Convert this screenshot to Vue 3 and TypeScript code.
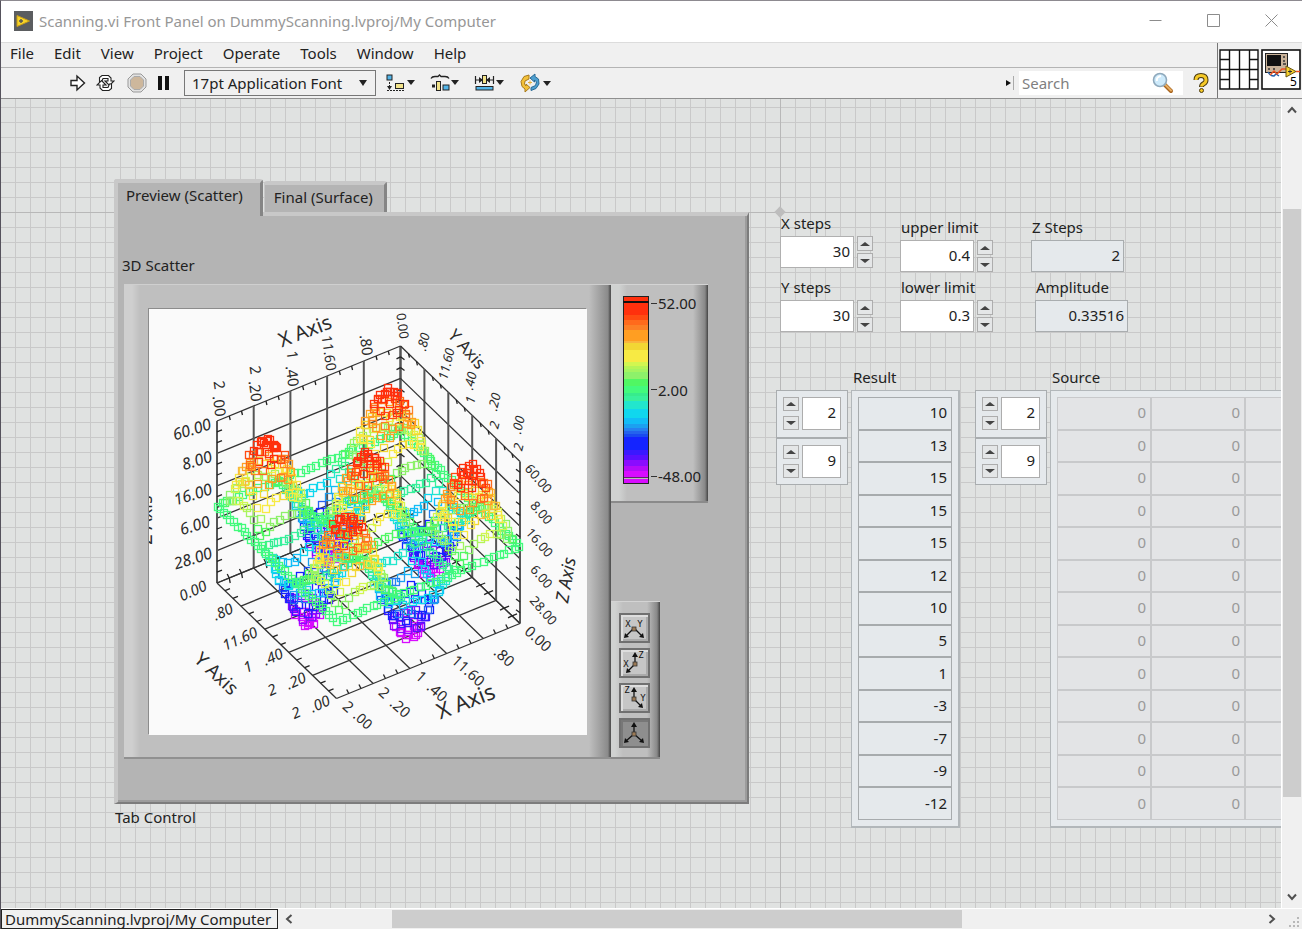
<script setup lang="ts">
import { ref } from 'vue'

interface Line { x1: number; y1: number; x2: number; y2: number; w: number; c: string }
interface Marker { x: number; y: number; c: string }
interface Caption { t: string; x: number; y: number; r: number; s: number; i?: boolean }

const menus = ['File', 'Edit', 'View', 'Project', 'Operate', 'Tools', 'Window', 'Help']

const xSteps = ref('30')
const ySteps = ref('30')
const upper = ref('0.4')
const lower = ref('0.3')
const zSteps = ref('2')
const amplitude = ref('0.33516')
const search = ref('')
const activeTab = ref(0)
const view = ref(3)
const indexes = ref([['2', '9'], ['2', '9']])

const result = [10, 13, 15, 15, 15, 12, 10, 5, 1, -3, -7, -9, -12]

/* colour ramp: [height, colour], top to bottom */
const ramp: [number, string][] = [
  [18, '#ff300d'], [5, '#ff4b12'], [5, '#ff6a1c'], [5, '#fc8026'], [11, '#ff9e22'], [2, '#f9b53e'],
  [7, '#f2d634'], [12, '#f7ea44'], [4, '#d2f650'], [3, '#b5f457'], [3, '#a4f460'], [7, '#8df16a'],
  [7, '#50f763'], [7, '#43fa7d'], [3, '#37ec8c'], [5, '#39f09c'], [8, '#22e6cd'], [9, '#10d7ee'],
  [6, '#12bcf7'], [4, '#1ca0f0'], [3, '#2680f0'], [3, '#2463ee'], [3, '#1a4af0'], [13, '#1424ff'],
  [5, '#3a18ff'], [5, '#5a10ff'], [6, '#8a0cff'], [5, '#b40cf8'], [12, '#d80cff'],
]
const rampTotal = ramp.reduce((a, b) => a + b[0], 0)
const bands = ramp.map(([h, c], i) => ({
  h, c, y: ramp.slice(0, i).reduce((a, b) => a + b[0], 0),
}))
function colourAt(t: number): string {
  const y = t * rampTotal
  const hit = bands.find(b => y < b.y + b.h)
  return hit ? hit.c : '#d80cff'
}

/* u runs along X, v along Y, d is the depth below the ceiling in pixels */
const H = 162
const project = (u: number, v: number, d: number) => ({
  x: 400.5 - 183.5 * u + 119.5 * v,
  y: 346 + 75 * u + 115.5 * v + d,
})
const lines: Line[] = []
function seg(a: [number, number, number], b: [number, number, number], w = 1.3, c = '#333') {
  const p = project(...a)
  const q = project(...b)
  lines.push({ x1: p.x, y1: p.y, x2: q.x, y2: q.y, w, c })
}
function tick(a: [number, number, number], dx: number, dy: number) {
  const p = project(...a)
  lines.push({ x1: p.x, y1: p.y, x2: p.x + dx, y2: p.y + dy, w: 1.3, c: '#222' })
}
for (let k = 0; k <= 5; k++) {
  const f = k / 5
  seg([f, 0, 0], [f, 0, H], 2, '#555')
  seg([0, f, 0], [0, f, H], 2, '#555')
  seg([0, 0, f * H], [1, 0, f * H])
  seg([0, 0, f * H], [0, 1, f * H])
  seg([f, 0, H], [f, 1, H])
  seg([0, f, H], [1, f, H])
}
for (let k = 0; k < 15; k++) {
  if (k % 3 === 0) continue
  const f = k / 15
  tick([f, 0, 0], 1, 4)
  tick([0, f, 0], 1, 4)
  tick([1, 0, f * H], 5, -2)
  tick([0, 1, f * H], -4, -3)
  tick([0, 0, f * H], 4, 3)
  tick([0, 0, f * H], -4, 2)
  tick([1, f, H], 5, -2)
  tick([f, 1, H], -2, -4)
  tick([f, 0, H], 1, 5)
  tick([f, 0, H], -2, -4)
  tick([0, f, H], 5, -2)
  tick([0, f, H], -4, 2)
}

const markers: (Marker & { o: number })[] = []
const noise = (n: number) => { const s = Math.sin(n * 12.9898) * 43758.5453; return s - Math.floor(s) - 0.5 }
const N = 36
for (let i = 0; i < N; i++) {
  for (let j = 0; j < N; j++) {
    const u = i / (N - 1)
    const v = j / (N - 1)
    const z = Math.sin(3 * Math.PI * u) * Math.sin(3 * Math.PI * v)
    const amp = 2 + 4 * Math.abs(z)
    const p = project(u, v, 85 - 72 * z + noise(i * 31 + j) * amp)
    p.x += noise(i * 57 + j * 3 + 7) * amp
    markers.push({ x: Math.round(p.x) - 3.5, y: Math.round(p.y) - 3.5, c: colourAt((1 - z) / 2), o: u + v })
  }
}
markers.sort((a, b) => a.o - b.o)

const captions: Caption[] = [
  { t: 'X Axis', x: 305, y: 331, r: -21, s: 20 },
  { t: 'Y Axis', x: 467, y: 349, r: 48, s: 17 },
  { t: 'Y Axis', x: 216, y: 674, r: 43, s: 19 },
  { t: 'X Axis', x: 466, y: 702, r: -21, s: 22 },
  { t: 'Z Axis', x: 566, y: 580, r: -80, s: 18, i: true },
  { t: 'Z Axis', x: 146, y: 520, r: -90, s: 18 },
  { t: '60.00', x: 192, y: 430, r: -17, s: 16, i: true },
  { t: '8.00', x: 197, y: 461, r: -17, s: 16, i: true },
  { t: '16.00', x: 193, y: 495, r: -17, s: 16, i: true },
  { t: '6.00', x: 195, y: 526, r: -17, s: 16, i: true },
  { t: '28.00', x: 193, y: 559, r: -17, s: 16, i: true },
  { t: '0.00', x: 193, y: 591, r: -24, s: 15, i: true },
  { t: '.80', x: 223, y: 612, r: -24, s: 15, i: true },
  { t: '11.60', x: 240, y: 639, r: -24, s: 15, i: true },
  { t: '1', x: 248, y: 667, r: -24, s: 15, i: true },
  { t: '.40', x: 273, y: 657, r: -24, s: 15, i: true },
  { t: '2', x: 272, y: 690, r: -24, s: 15, i: true },
  { t: '.20', x: 296, y: 681, r: -24, s: 15, i: true },
  { t: '2', x: 296, y: 713, r: -24, s: 15, i: true },
  { t: '.00', x: 320, y: 704, r: -24, s: 15, i: true },
  { t: '2', x: 348, y: 707, r: 42, s: 15 },
  { t: '.00', x: 363, y: 720, r: 42, s: 14 },
  { t: '2', x: 384, y: 693, r: 42, s: 15 },
  { t: '.20', x: 400, y: 708, r: 42, s: 15 },
  { t: '1', x: 421, y: 677, r: 42, s: 15 },
  { t: '.40', x: 437, y: 692, r: 42, s: 15 },
  { t: '11.60', x: 468, y: 671, r: 42, s: 15 },
  { t: '.80', x: 504, y: 657, r: 42, s: 15 },
  { t: '0.00', x: 538, y: 639, r: 42, s: 15 },
  { t: '2', x: 219, y: 385, r: 82, s: 15 },
  { t: '.00', x: 219, y: 406, r: 82, s: 15 },
  { t: '2', x: 255, y: 370, r: 82, s: 15 },
  { t: '.20', x: 255, y: 391, r: 82, s: 15 },
  { t: '1', x: 292, y: 355, r: 82, s: 15 },
  { t: '.40', x: 292, y: 376, r: 82, s: 15 },
  { t: '11.60', x: 329, y: 353, r: 82, s: 14 },
  { t: '.80', x: 366, y: 345, r: 82, s: 15 },
  { t: '0.00', x: 402, y: 326, r: 82, s: 13 },
  { t: '.80', x: 424, y: 342, r: -76, s: 13, i: true },
  { t: '11.60', x: 447, y: 364, r: -76, s: 13, i: true },
  { t: '1', x: 471, y: 400, r: -76, s: 13, i: true },
  { t: '.40', x: 471, y: 381, r: -76, s: 13, i: true },
  { t: '2', x: 495, y: 425, r: -76, s: 13, i: true },
  { t: '.20', x: 495, y: 402, r: -76, s: 13, i: true },
  { t: '2', x: 519, y: 447, r: -76, s: 13, i: true },
  { t: '.00', x: 519, y: 425, r: -76, s: 13, i: true },
  { t: '60.00', x: 538, y: 479, r: 49, s: 13 },
  { t: '8.00', x: 541, y: 513, r: 49, s: 13 },
  { t: '16.00', x: 539, y: 543, r: 49, s: 13 },
  { t: '6.00', x: 541, y: 577, r: 49, s: 13 },
  { t: '28.00', x: 543, y: 611, r: 49, s: 13 },
]

const views = [
  { name: 'XY view', lines: ['M14 14 6 22', 'M14 14 22 22'], heads: ['4,24 5,19 9,23', '24,24 23,19 19,23'], text: [['X', 8, 13], ['Y', 20, 13]] },
  { name: 'XZ view', lines: ['M15 15V6', 'M15 15 8 22'], heads: ['15,3 12,8 18,8', '6,24 7,19 11,23'], text: [['X', 6, 18], ['Z', 21, 9]] },
  { name: 'YZ view', lines: ['M14 15V6', 'M14 15 21 22'], heads: ['14,3 11,8 17,8', '23,24 22,19 18,23'], text: [['Z', 7, 9], ['Y', 23, 17]] },
  { name: 'Perspective view', lines: ['M14 15V6', 'M14 15 6 22', 'M14 15 22 22'], heads: ['14,3 11,8 17,8', '4,24 5,19 9,23', '24,24 23,19 19,23'], text: [] },
] as { name: string; lines: string[]; heads: string[]; text: [string, number, number][] }[]

function bump(value: string, by: number): string {
  return String(Math.round((Number(value) + by) * 10) / 10)
}
</script>

<template>
  <div class="window">
    <header class="titlebar">
      <svg class="appicon" viewBox="0 0 19 20" aria-hidden="true">
        <rect width="19" height="20" fill="#5b5d60" />
        <path d="M3 4.500V15.500L15.500 10Z" fill="#f8d427" stroke="#c79d18" />
        <path d="M5 10h4M7 8v4" stroke="#555" stroke-width="1.400" />
      </svg>
      <h1>Scanning.vi Front Panel on DummyScanning.lvproj/My Computer</h1>
      <button class="winbtn" aria-label="Minimize"><svg viewBox="0 0 13 13"><path d="M.5 6.500h12" /></svg></button>
      <button class="winbtn" aria-label="Maximize"><svg viewBox="0 0 13 13"><path d="M.5.5h12v12H.5z" /></svg></button>
      <button class="winbtn" aria-label="Close"><svg viewBox="0 0 13 13"><path d="M.5.5l12 12M12.500.5l-12 12" /></svg></button>
    </header>

    <div class="head">
      <div class="bars">
        <nav class="menubar">
          <button v-for="m in menus" :key="m">{{ m }}</button>
        </nav>
        <div class="toolbar">
          <button aria-label="Run" class="tool run">
            <svg width="16" height="18" viewBox="0 0 16 18"><path d="M1 6.500h6V2l7.500 7L7 16v-4.500H1z" fill="#fff" stroke="#222" stroke-width="1.400" /></svg>
          </button>
          <button aria-label="Run Continuously" class="tool loop">
            <svg width="19" height="18" viewBox="0 0 19 18" fill="#fff" stroke="#222" stroke-width="1.100">
              <path d="M3.500 8V3.500L6 1.500h6.500L15 4v3h3l-4.500 4.500L9 7h3V4.500H7L5.500 8z" />
              <path d="M15.500 10v4.500L13 16.500H6.500L4 14v-3H1l4.500-4.500L10 11H7v2.500h5l1.500-3.500z" />
            </svg>
          </button>
          <button aria-label="Abort Execution" class="tool abort">
            <svg width="20" height="20" viewBox="0 0 20 20">
              <path d="M6 1h8l5 5v8l-5 5H6l-5-5V6z" fill="#e2e2e2" stroke="#999" />
              <path d="M7 3.500h6L16.500 7v6L13 16.500H7L3.500 13V7z" fill="#cdb79c" stroke="#aaa" />
            </svg>
          </button>
          <button aria-label="Pause" class="tool pause">
            <svg width="12" height="14" viewBox="0 0 12 14"><path d="M0 0h4v14H0zM7 0h4v14H7z" fill="#111" /></svg>
          </button>
          <div class="fontpick">
            <select aria-label="Text settings"><option>17pt Application Font</option></select>
            <svg width="8" height="6" viewBox="0 0 8 6"><path d="M0 0h8L4 6z" fill="#222" /></svg>
          </div>
          <button aria-label="Align Objects" class="tool align">
            <svg width="29" height="18" viewBox="0 0 29 18">
              <rect x="1" y="1" width="5" height="5" fill="#52b4e8" stroke="#222" />
              <path d="M3.500 8v6M1 16.500h17" stroke="#222" stroke-dasharray="2 1" />
              <path d="M1 12h5l-2.500 4z" fill="#222" />
              <rect x="9.500" y="9.500" width="8" height="5" fill="#f2e38a" stroke="#222" />
              <path d="M21 6h8l-4 5z" fill="#222" />
            </svg>
          </button>
          <button aria-label="Distribute Objects" class="tool dist">
            <svg width="29" height="18" viewBox="0 0 29 18">
              <path d="M1 4.500Q2 2.500 5 2.500h3L9.500 1 11 2.500h4q3 0 4 2" fill="none" stroke="#222" stroke-width="1.300" />
              <path d="M2 10.500h3v3H2z" fill="#222" />
              <rect x="6.500" y="7.500" width="4" height="9" fill="#f2e38a" stroke="#222" />
              <rect x="13" y="11" width="6" height="5" fill="#52b4e8" stroke="#222" />
              <path d="M21 6h8l-4 5z" fill="#222" />
            </svg>
          </button>
          <button aria-label="Resize Objects" class="tool resize">
            <svg width="30" height="18" viewBox="0 0 30 18">
              <path d="M1.500 2v8M19.500 2v8M2 6h6M13 6h6" stroke="#222" stroke-width="1.200" />
              <path d="M5 3v6l4-3zM16 3v6l-4-3z" fill="#222" />
              <rect x="8.500" y="1.500" width="4" height="8" fill="#f2e38a" stroke="#222" />
              <rect x="2" y="12.500" width="17" height="3.500" fill="#52b4e8" stroke="#222" />
              <path d="M22 6h8l-4 5z" fill="#222" />
            </svg>
          </button>
          <button aria-label="Reorder" class="tool order">
            <svg width="31" height="20" viewBox="0 0 31 20">
              <path d="M9 2 4 3.500 1 8.500l1 5 3 2.500v3l5-4.500L6 11v2L4.500 11 5 8 9 6z" fill="#f3c13a" stroke="#a87a1c" />
              <path d="M11 17.500l5-2 3-4.500-.5-5L15 3.500V1l-5 4 4.500 4V7l2 2-1 3.500-4.500 2z" fill="#4d9fd0" stroke="#2a6a95" />
              <path d="M8 9.500h4M10 7.500v4" stroke="#e6b13a" />
              <path d="M23 8h8l-4 5z" fill="#222" />
            </svg>
          </button>
          <div class="spring"></div>
          <svg class="grip" width="10" height="16" viewBox="0 0 10 16"><path d="M1 5v6l5-3z" fill="#111" /><path d="M8.500 1v14" stroke="#aaa" /></svg>
          <div class="search">
            <input v-model="search" type="text" placeholder="Search" aria-label="Search" />
            <svg width="22" height="22" viewBox="0 0 22 22">
              <path d="M12 12l7 7" stroke="#a9641d" stroke-width="4" stroke-linecap="round" />
              <path d="M13 12.500l6 6" stroke="#e8ae62" stroke-width="2" stroke-linecap="round" />
              <circle cx="8" cy="8" r="6.500" fill="#cdeafb" stroke="#8fa9bc" stroke-width="1.600" />
              <path d="M5 9q-1-4 4-5" fill="none" stroke="#fff" stroke-width="2" />
            </svg>
          </div>
          <button aria-label="Context Help" class="tool help">
            <svg width="16" height="20" viewBox="0 0 16 20">
              <path d="M3 7q0-4.500 5-4.500T13 7q0 2.500-2.500 3.800Q8.500 11.800 8.500 14" fill="none" stroke="#4a3a10" stroke-width="5" />
              <path d="M3 7q0-4.500 5-4.500T13 7q0 2.500-2.500 3.800Q8.500 11.800 8.500 13.500" fill="none" stroke="#f5c928" stroke-width="3" />
              <circle cx="8.500" cy="17.500" r="2" fill="#f5c928" stroke="#4a3a10" />
            </svg>
          </button>
        </div>
      </div>
      <div class="vipane">
        <svg width="40" height="41" viewBox="0 0 40 41" aria-hidden="true">
          <path d="M1 1h38v39H1zM10.500 1v39M20.500 1v39M30.500 1v39M1 20.500h38M1 10.500h9.500M30.500 10.500H39M1 30.500h9.500M30.500 30.500H39" fill="#fff" stroke="#111" stroke-width="1.400" />
        </svg>
        <svg width="40" height="41" viewBox="0 0 40 41" aria-label="VI icon">
          <rect x="1" y="1" width="38" height="39" fill="#fff" stroke="#111" stroke-width="1.600" />
          <rect x="4.500" y="4.500" width="22" height="19" fill="#c9b299" stroke="#222" />
          <rect x="6" y="6" width="14" height="11" fill="#111" />
          <path d="M23 7v2M23 11v2M22 15h3M7 20h2M12 20h2" stroke="#333" stroke-width="1.500" />
          <path d="M7 23q2 4 6 4l2-2 3 2" fill="none" stroke="#2560a8" stroke-width="1.500" />
          <path d="M9 26l4-4 3 3 5-5h5M35 22.500h4" fill="none" stroke="#f0501c" stroke-width="1.500" />
          <path d="M25 17v11l10-5.500z" fill="#f6d02d" stroke="#6a5510" />
          <path d="M27 22.500h4M29 20.500v4" stroke="#333" />
          <text x="29" y="37" font-size="12">5</text>
        </svg>
      </div>
    </div>

    <main class="work">
      <div class="canvas">
        <span class="origin"></span>
        <section class="tabctl">
          <div class="tabs" role="tablist">
            <button role="tab" class="tab" :class="{ on: activeTab === 0 }" @click="activeTab = 0">Preview (Scatter)</button>
            <button role="tab" class="tab" :class="{ on: activeTab === 1 }" @click="activeTab = 1">Final (Surface)</button>
          </div>
          <div class="page">
            <h2>3D Scatter</h2>
            <div class="graph">
              <div class="frame">
                <svg class="plot" viewBox="149 309 438 426" role="img" aria-label="3D scatter plot">
                  <line v-for="(l, i) in lines" :key="i" :x1="l.x1" :y1="l.y1" :x2="l.x2" :y2="l.y2" :stroke="l.c" :stroke-width="l.w" />
                  <g fill="none" stroke-width="1.300">
                    <rect v-for="(m, i) in markers" :key="i" :x="m.x" :y="m.y" width="7" height="7" :stroke="m.c" />
                  </g>
                  <g class="captions">
                    <text
                      v-for="(c, i) in captions" :key="i" :font-size="c.s" :class="{ slant: c.i }"
                      :transform="`translate(${c.x} ${c.y}) rotate(${c.r})`" :y="Math.round(c.s / 3)"
                    >{{ c.t }}</text>
                  </g>
                </svg>
              </div>
              <div class="side">
                <div class="scale">
                  <svg width="26" height="188" viewBox="0 0 26 188" aria-hidden="true">
                    <rect v-for="b in bands" :key="b.y" x="1" :y="b.y + 1" width="24" :height="b.h" :fill="b.c" />
                    <rect x=".5" y=".5" width="25" height="187" fill="none" stroke="#222" />
                    <path d="M0 6h26" stroke="#111" stroke-width="2" />
                    <path d="M1 181.500h24" stroke="#5b2a66" />
                    <path d="M1 182.500h24" stroke="#bbb" />
                  </svg>
                  <div class="ticks"><span>52.00</span><span>2.00</span><span>-48.00</span></div>
                </div>
                <div class="palette">
                  <button v-for="(p, i) in views" :key="p.name" :aria-label="p.name" :class="{ on: view === i }" @click="view = i">
                    <svg width="28" height="28" viewBox="0 0 28 28">
                      <path v-for="d in p.lines" :key="d" :d="d" stroke="#111" stroke-width="1.300" />
                      <polygon v-for="h in p.heads" :key="h" :points="h" fill="#111" />
                      <rect :x="i === 1 ? 13 : 12" y="13" width="4" height="4" fill="#9c7a55" stroke="#333" stroke-width=".8" />
                      <text v-for="t in p.text" :key="t[0]" :x="t[1]" :y="t[2]">{{ t[0] }}</text>
                    </svg>
                  </button>
                </div>
              </div>
            </div>
          </div>
          <p class="caption">Tab Control</p>
        </section>

        <section class="panel">
          <div class="controls">
            <div class="stack">
              <div class="num">
                <label for="xs">X steps</label>
                <div class="row">
                  <input id="xs" v-model="xSteps" type="text" />
                  <span class="spin"><button aria-label="Increase X steps" @click="xSteps = bump(xSteps, 1)"></button><button aria-label="Decrease X steps" class="dn" @click="xSteps = bump(xSteps, -1)"></button></span>
                </div>
              </div>
              <div class="num">
                <label for="ys">Y steps</label>
                <div class="row">
                  <input id="ys" v-model="ySteps" type="text" />
                  <span class="spin"><button aria-label="Increase Y steps" @click="ySteps = bump(ySteps, 1)"></button><button aria-label="Decrease Y steps" class="dn" @click="ySteps = bump(ySteps, -1)"></button></span>
                </div>
              </div>
            </div>
            <div class="stack low">
              <div class="num">
                <label for="ul">upper limit</label>
                <div class="row">
                  <input id="ul" v-model="upper" type="text" />
                  <span class="spin"><button aria-label="Increase upper limit" @click="upper = bump(upper, 0.1)"></button><button aria-label="Decrease upper limit" class="dn" @click="upper = bump(upper, -0.1)"></button></span>
                </div>
              </div>
              <div class="num">
                <label for="ll">lower limit</label>
                <div class="row">
                  <input id="ll" v-model="lower" type="text" />
                  <span class="spin"><button aria-label="Increase lower limit" @click="lower = bump(lower, 0.1)"></button><button aria-label="Decrease lower limit" class="dn" @click="lower = bump(lower, -0.1)"></button></span>
                </div>
              </div>
            </div>
            <div class="stack low readouts">
              <div class="num out"><label for="zs">Z Steps</label><input id="zs" v-model="zSteps" type="text" readonly /></div>
              <div class="num out amp"><label for="am">Amplitude</label><input id="am" v-model="amplitude" type="text" readonly /></div>
            </div>
          </div>

          <div class="arrays">
            <template v-for="(pair, a) in indexes" :key="a">
              <div class="index">
                <div v-for="(_, k) in pair" :key="k" class="idx">
                  <span class="spin"><button aria-label="Next index" @click="pair[k] = bump(pair[k], 1)"></button><button aria-label="Previous index" class="dn" @click="pair[k] = bump(pair[k], -1)"></button></span>
                  <input v-model="pair[k]" type="text" :aria-label="(a ? 'Source' : 'Result') + ' index ' + k" />
                </div>
              </div>
              <div class="array" :class="{ source: a === 1 }">
                <h3>{{ a ? 'Source' : 'Result' }}</h3>
                <div class="cells">
                  <table :aria-label="a ? 'Source' : 'Result'">
                    <tbody>
                      <tr v-for="(r, i) in result" :key="i">
                        <td>{{ a ? 0 : r }}</td>
                        <td v-if="a">0</td>
                        <td v-if="a" class="rest"></td>
                      </tr>
                    </tbody>
                  </table>
                </div>
              </div>
            </template>
          </div>
        </section>
      </div>
      <div class="vscroll">
        <button aria-label="Scroll up"><svg width="10" height="8" viewBox="0 0 10 8"><path d="M1 6.500 5 2l4 4.500" /></svg></button>
        <i class="before"></i><i class="thumb"></i><i class="after"></i>
        <button aria-label="Scroll down"><svg width="10" height="8" viewBox="0 0 10 8"><path d="M1 1.500 5 6l4-4.500" /></svg></button>
      </div>
    </main>

    <footer class="foot">
      <div class="target">DummyScanning.lvproj/My Computer</div>
      <div class="hscroll">
        <button aria-label="Scroll left"><svg width="8" height="10" viewBox="0 0 8 10"><path d="M6.500 1 2 5l4.500 4" /></svg></button>
        <i class="before"></i><i class="thumb"></i><i class="after"></i>
        <button aria-label="Scroll right"><svg width="8" height="10" viewBox="0 0 8 10"><path d="M1.500 1 6 5 1.500 9" /></svg></button>
      </div>
      <svg class="sizer" width="10" height="10" viewBox="0 0 10 10" aria-hidden="true">
        <path d="M8 0h2v2H8zM4 4h2v2H4zM8 4h2v2H8zM0 8h2v2H0zM4 8h2v2H4zM8 8h2v2H8z" fill="#b8b8b8" />
      </svg>
    </footer>
  </div>
</template>

<style>
html, body { margin: 0; height: 100%; }
#app { height: 100%; }
</style>

<style scoped>
* { box-sizing: border-box; }
.window {
  display: flex; flex-direction: column; min-height: 100vh;
  border-left: 1px solid #55525c; border-top: 1px solid #8d8a90;
  background: #f0f0f0; color: #222;
  font: 15px/20px "Noto Sans", "Open Sans", sans-serif;
}
button, input, select { font: inherit; color: inherit; }
button { border: 0; padding: 0; background: none; }
h1, h2, h3, p { margin: 0; font-weight: 400; font-size: 15px; }
svg { display: block; flex: none; }

.titlebar { display: flex; align-items: center; height: 41px; background: #fff; padding: 0 2px 2px 13px; }
.appicon { width: 19px; height: 20px; }
.titlebar h1 { flex: 1; margin-left: 6px; color: #979797; }
.winbtn { width: 58px; height: 39px; display: flex; align-items: center; justify-content: center; }
.winbtn svg { width: 13px; height: 13px; fill: none; stroke: #8c8c8c; }

.head { display: flex; border-top: 1px solid #dcdcdc; border-bottom: 1px solid #8f8f8f; }
.bars { flex: 1; min-width: 0; }
.menubar { display: flex; gap: 20px; height: 25px; align-items: center; padding: 0 0 5px 9px; border-bottom: 1px solid #b4b4b4; }
.toolbar { display: flex; align-items: center; height: 30px; padding-left: 69px; }
.loop { margin-left: 10px; }
.abort { margin-left: 12px; }
.pause { margin-left: 11px; }
.fontpick { position: relative; margin-left: 14px; width: 192px; }
.fontpick select { width: 100%; height: 26px; appearance: none; border: 1px solid #777; border-radius: 0; background: #f0f0f0; padding: 0 24px 0 7px; }
.fontpick svg { position: absolute; right: 9px; top: 10px; pointer-events: none; }
.align { margin-left: 10px; }
.dist { margin-left: 15px; }
.resize { margin-left: 15px; }
.order { margin-left: 16px; }
.spring { flex: 1; }
.search { display: flex; align-items: center; width: 164px; height: 24px; margin-left: 4px; background: #fff; }
.search input { flex: 1; min-width: 0; border: 0; outline: 0; padding: 0 3px; background: none; }
.search input::placeholder { color: #808080; opacity: 1; }
.search svg { margin-right: 9px; }
.help { margin: 0 8px 0 10px; }
.vipane { display: flex; gap: 2px; align-items: flex-start; width: 85px; padding: 6px 0 0 1px; border-left: 1px solid #777; }

.work { flex: 1; display: flex; min-height: 0; }
.canvas {
  flex: 1; min-width: 0; position: relative; overflow: hidden; display: flex; align-items: flex-start; padding-left: 113px;
  background:
    linear-gradient(#b8b8b8, #b8b8b8) 779px 0 / 1px 100% no-repeat,
    linear-gradient(#b8b8b8, #b8b8b8) 0 113px / 100% 1px no-repeat,
    linear-gradient(90deg, #c9c9c9 1px, transparent 1px) 14px 0 / 15px 15px,
    linear-gradient(#c9c9c9 1px, transparent 1px) 0 8px / 15px 15px,
    #e0e2e1;
}
.origin { position: absolute; left: 775px; top: 109px; width: 8px; height: 8px; background: #bdbdbd; transform: rotate(45deg); }

.tabctl { width: 635px; flex: none; margin-top: 80px; }
.tabs { display: flex; align-items: flex-end; gap: 1px; }
.tab {
  height: 31px; padding: 0 11px 4px 9px; background: #b4b4b4; border-style: solid;
  border-width: 4px 3px 0 1px; border-color: #c8c8c8 #858585 #c8c8c8 #c8c8c8; border-radius: 3px 3px 0 0;
}
.tab.on { height: 37px; margin-bottom: -4px; padding: 0 17px 10px 8px; border-left-width: 4px; position: relative; z-index: 1; }
.page {
  background: #b4b4b4; border: solid; border-width: 4px 2px 2px 4px; border-color: #c8c8c8 #7c7c7c #7c7c7c #c8c8c8;
  box-shadow: inset -2px -2px 0 #9c9c9c;
  padding: 39px 0 43px 6px;
}
.page h2 { margin: 0 0 9px -2px; }
.graph { display: flex; }
.frame {
  width: 487px; flex: none; padding: 24px 24px 22px 25px;
  border-top: 1px solid #cfcfcf; border-bottom: 2px solid #909090;
  background: linear-gradient(90deg, #cfcfcf, #cfcfcf 8px, #bfbfbf 16px, #bfbfbf 465px, #8a8a8a 484px, #555 486px);
}
.plot { width: 438px; height: 426px; background: #fafafa; box-shadow: -1px -1px 0 #8c8c8c; }
.captions { text-anchor: middle; font-family: "Noto Sans", "Open Sans", sans-serif; fill: #2c2c2c; }
.slant { font-style: italic; }
.side { display: flex; flex-direction: column; justify-content: space-between; align-items: flex-start; }
.scale, .palette { border-top: 1px solid #d4d4d4; border-bottom: 2px solid #8a8a8a; }
.scale {
  display: flex; width: 97px; height: 219px; padding: 11px 0 0 12px;
  background: linear-gradient(90deg, #d0d2d1, #d0d2d1 8px, #bfbfbf 16px, #bfbfbf 82px, #888 94px, #444 97px);
}
.ticks { display: flex; flex-direction: column; justify-content: space-between; height: 193px; margin-left: 2px; margin-top: -3px; }
.ticks span { display: flex; align-items: center; }
.ticks span::before { content: ""; width: 6px; height: 1px; margin-right: 1px; background: #333; }
.palette {
  display: flex; flex-direction: column; gap: 5px; width: 49px; padding: 11px 8px 9px;
  background: linear-gradient(90deg, #d0d2d1, #d0d2d1 4px, #bfbfbf 12px, #bfbfbf 36px, #888 46px, #444 49px);
}
.palette button { width: 31px; height: 30px; border: 2px solid #707070; background: #c6c6c6; box-shadow: inset 2px 2px 0 #dedede, inset -2px -2px 0 #aaa; overflow: hidden; }
.palette button svg { width: 28px; height: 28px; margin: -1px; }
.palette button.on { background: #8e8e8e; box-shadow: inset 2px 2px 0 #777; }
.palette text { font: 9px "DejaVu Sans Mono", monospace; text-anchor: middle; fill: #111; }
.caption { margin-top: 3px; padding-left: 1px; }

.panel { flex: 1; min-width: 0; margin: 115px 0 0 27px; }
.controls { display: flex; padding-left: 4px; }
.stack { display: flex; flex-direction: column; justify-content: space-between; gap: 6px; min-height: 118px; width: 94px; margin-right: 26px; flex: none; }
.low { margin-top: 4px; min-height: 114px; }
.readouts { width: 98px; margin: 4px 0 0 11px; }
.num { display: flex; flex-direction: column; gap: 4px; }
.num label { line-height: 18px; padding-left: 1px; white-space: nowrap; }
.row { display: flex; gap: 3px; }
input { border-radius: 0; outline: 0; }
.num input { width: 74px; height: 32px; border: 1px solid #b0b0b0; background: #fff; text-align: right; padding: 0 3px 2px; }
.num.out input { width: 93px; background: #e5e9ec; border-color: #a9adaf; }
.amp { margin-left: 4px; }
.spin { display: flex; flex-direction: column; justify-content: space-between; }
.spin button { width: 16px; height: 15px; border: 1px solid #adadad; background: #e4e6e7; display: flex; align-items: center; justify-content: center; }
.spin button::before { content: ""; border: 5px solid transparent; border-top: 0; border-bottom: 4px solid #444; }
.spin button.dn::before { border-top: 4px solid #444; border-bottom: 0; }

.arrays { display: flex; align-items: flex-start; margin-top: 36px; }
.index { width: 72px; flex: none; margin: 22px 3px 0 0; border: 1px solid #a9adaf; background: #e5e9ec; }
.idx { display: flex; justify-content: space-between; height: 46px; padding: 6px; }
.idx + .idx { height: 47px; border-top: 2px solid #a9adaf; }
.idx .spin { height: 33px; }
.idx .spin button { height: 14px; }
.idx input { width: 39px; height: 33px; border: 1px solid #adadad; background: #fff; text-align: right; padding: 0 4px 3px; }
.array { flex: none; margin-right: 15px; }
.array h3 { padding-left: 2px; line-height: 18px; margin-bottom: 4px; }
.cells { border: solid #b2b7ba; border-width: 1px 2px 2px 1px; background: #e5e9ec; padding: 6px; }
.cells table { border-collapse: separate; border-spacing: 0; table-layout: fixed; width: 94px; height: 423px; }
td { width: 94px; border: 1px solid #a7abad; text-align: right; padding: 0 4px 2px; }
.source { flex: 1; min-width: 0; margin-right: 0; }
.source .cells { border-right: 0; padding-right: 0; }
.source table { width: 100%; }
.source td { background: #e3e4e6; border-color: #c8c9cb; color: #999; }
.source td.rest { width: auto; border-right: 0; }

.vscroll, .hscroll { display: flex; background: #f0f0f0; }
.vscroll { flex-direction: column; width: 21px; padding: 0 1px; border-left: 1px solid #fff; }
.vscroll button, .hscroll button { display: flex; align-items: center; justify-content: center; flex: none; }
.vscroll button { height: 22px; }
.vscroll svg, .hscroll svg { fill: none; stroke: #505050; stroke-width: 2; }
.thumb { background: #cdcdcd; }
.vscroll .before { flex: 88; }
.vscroll .thumb { flex: 588; }
.vscroll .after { flex: 89; }
.foot { display: flex; align-items: stretch; height: 21px; border-top: 1px solid #fff; }
.target { border: 1px solid #222; padding: 0 6px 0 3px; line-height: 18px; white-space: nowrap; }
.hscroll { flex: 1; padding: 1px 0; }
.hscroll button { width: 21px; }
.hscroll .before { flex: 93; }
.hscroll .thumb { flex: 569; }
.hscroll .after { flex: 298; }
.sizer { align-self: flex-end; margin: 0 3px 2px 7px; }
</style>
